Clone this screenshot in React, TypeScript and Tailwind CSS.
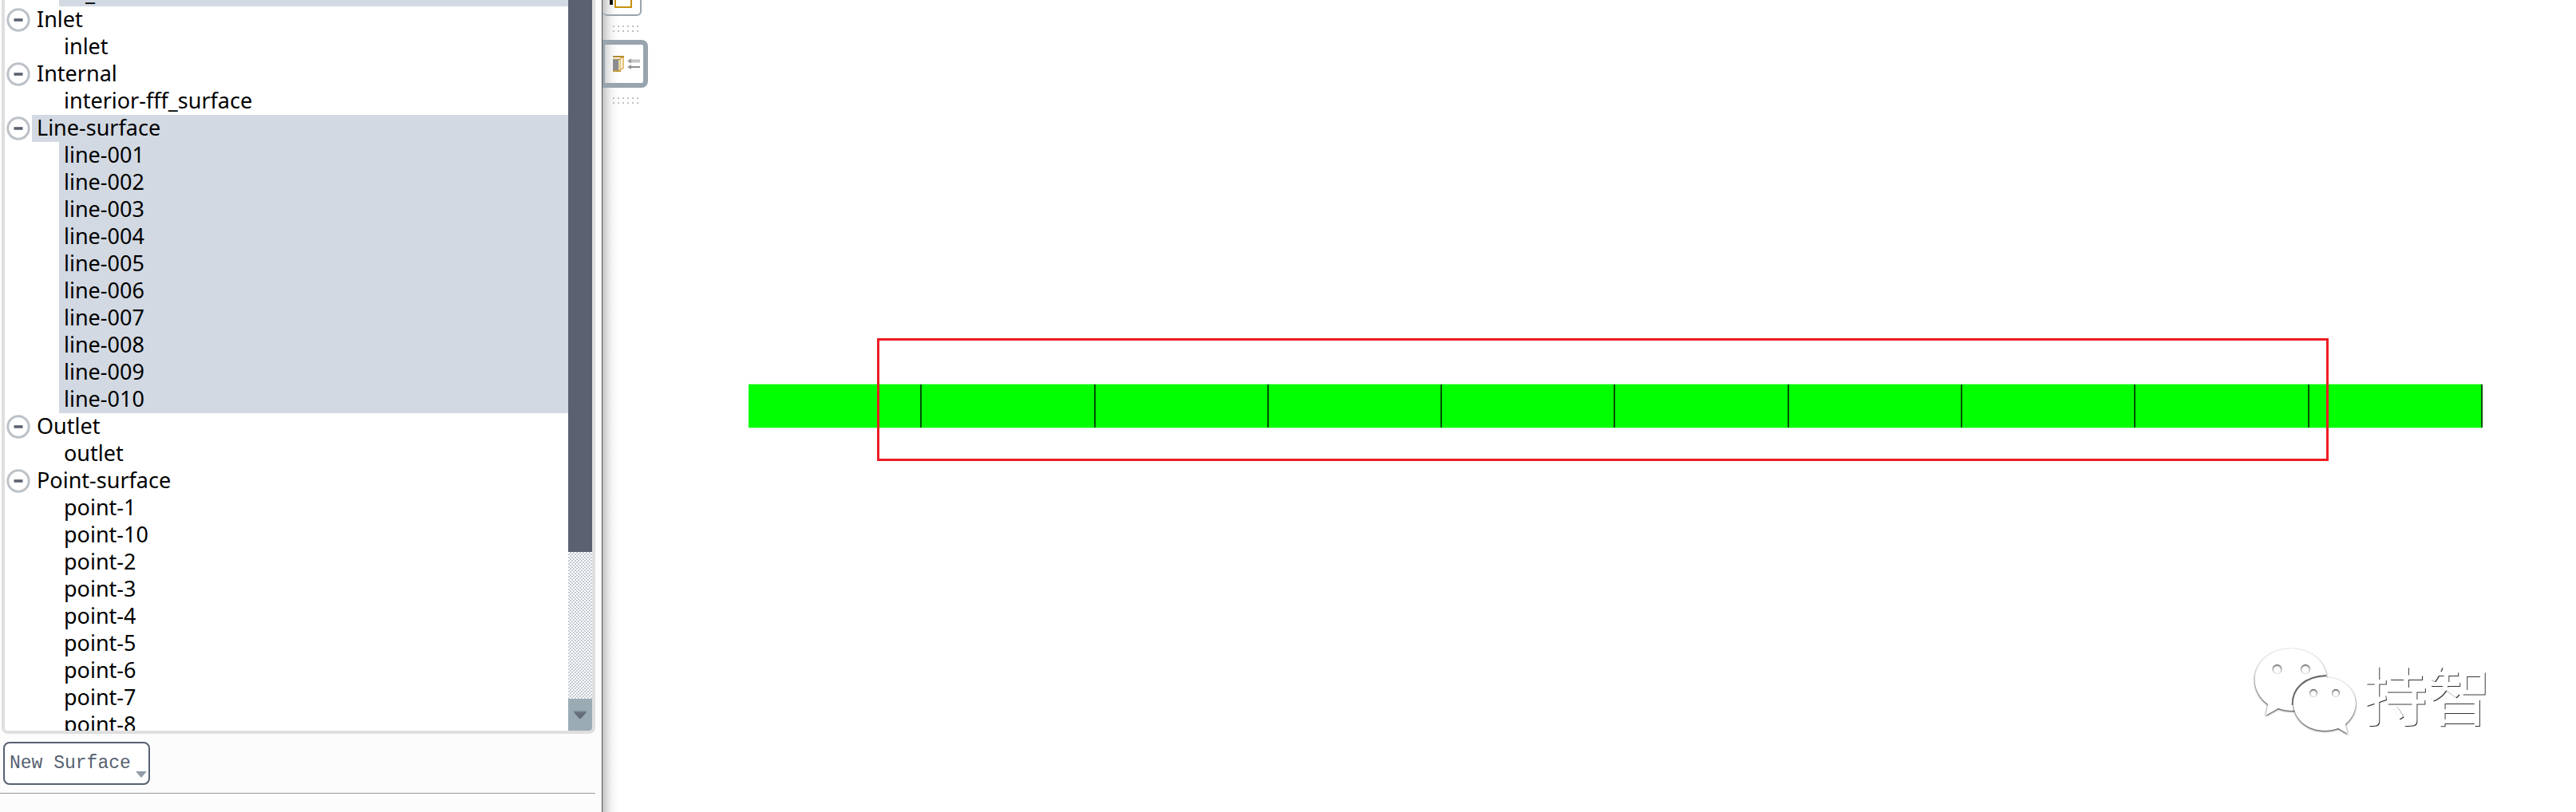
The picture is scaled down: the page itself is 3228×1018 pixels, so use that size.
type RowProps = { label: string; group?: boolean; selected?: boolean };

const rows: RowProps[] = [
  { label: "Inlet", group: true },
  { label: "inlet" },
  { label: "Internal", group: true },
  { label: "interior-fff_surface" },
  { label: "Line-surface", group: true, selected: true },
  { label: "line-001", selected: true },
  { label: "line-002", selected: true },
  { label: "line-003", selected: true },
  { label: "line-004", selected: true },
  { label: "line-005", selected: true },
  { label: "line-006", selected: true },
  { label: "line-007", selected: true },
  { label: "line-008", selected: true },
  { label: "line-009", selected: true },
  { label: "line-010", selected: true },
  { label: "Outlet", group: true },
  { label: "outlet" },
  { label: "Point-surface", group: true },
  { label: "point-1" },
  { label: "point-10" },
  { label: "point-2" },
  { label: "point-3" },
  { label: "point-4" },
  { label: "point-5" },
  { label: "point-6" },
  { label: "point-7" },
  { label: "point-8" },
];

function Row({ label, group, selected }: RowProps) {
  const tone = selected ? "bg-[#d2d9e2]" : "bg-white";
  return (
    <li className="flex h-[34px] shrink-0 items-center">
      {group ? (
        <button type="button" aria-label={"Collapse " + label} className="flex w-[34px] shrink-0 pl-0.5">
          <svg width="30" height="30" viewBox="0 0 30 30" className="block">
            <circle cx="15" cy="15" r="13.2" fill="#fff" stroke="#bcc2c8" strokeWidth="3" />
            <path d="M9.5 15h11" stroke="#5b6170" strokeWidth="3.6" />
          </svg>
        </button>
      ) : (
        <span className="w-[68px] shrink-0" />
      )}
      <span className={`flex h-full flex-1 items-center pb-0.5 pl-1.5 ${tone}`}>{label}</span>
    </li>
  );
}

function ScrollBar() {
  return (
    <div className="flex w-[30px] shrink-0 flex-col">
      <div className="w-full flex-[692] bg-[#5b6170]" />
      <div className="w-full flex-[184] bg-[conic-gradient(#c4ccd1_25%,#fff_0_50%,#c4ccd1_0_75%,#fff_0)] bg-[length:4px_4px]" />
      <button type="button" aria-label="Scroll down" className="flex h-10 items-center justify-center bg-[#9babb4]">
        <svg width="16" height="10" viewBox="0 0 16 10">
          <path d="M0 0h16v2H0z" fill="#7f8a95" />
          <path d="M0 2h16L9 10H7z" fill="#656d7b" />
        </svg>
      </button>
    </div>
  );
}

function Grip() {
  return (
    <div className="ml-[13px] grid w-8 grid-cols-6 gap-1">
      {Array.from({ length: 12 }, (_, i) => (
        <span key={i} className="size-0.5 bg-[#c0c0c0]" />
      ))}
    </div>
  );
}

function ToolBar() {
  return (
    <div className="flex w-[57px] shrink-0 flex-col items-start bg-[linear-gradient(to_right,#c2c2c2,#e0e0e0_6px,#f4f4f4_12px,#fff_20px)]">
      <button
        type="button"
        aria-label="Surface display"
        className="flex h-5 w-[49px] items-start rounded-b-md border-r-2 border-b-2 border-[#98a4ae] pl-[9px]"
      >
        <svg width="30" height="12" viewBox="0 0 30 12" className="block">
          <path d="M0 0h4v6H0z" fill="#111" />
          <path d="M7 -4V9H27V-4" fill="#fff" stroke="#c8920f" strokeWidth="2" />
        </svg>
      </button>
      <div className="pt-3 pb-2.5">
        <Grip />
      </div>
      <button
        type="button"
        aria-label="Toggle panel"
        className="flex h-[60px] w-[57px] items-center rounded-r-lg border-6 border-l-3 border-[#98a4ae] pl-2.5"
      >
        <svg width="36" height="22" viewBox="0 0 36 22" className="block">
          <path d="M0 5h9v14H0z" fill="#8c8c90" />
          <path d="M9 5l4-3v14l-4 3z" fill="#fff6e0" stroke="#e0b45c" strokeWidth="1.6" />
          <path d="M8 6v13" stroke="#ecd9a8" strokeWidth="2" />
          <path d="M0 2h14" stroke="#b58a2c" strokeWidth="2" />
          <path d="M0 5.5h9" stroke="#a98d50" strokeWidth="1.4" />
          <path d="M0 20h10" stroke="#c4983c" strokeWidth="2" />
          <path d="M20 7.500h14" stroke="#c4c4c4" strokeWidth="4" />
          <path d="M18 7.500l5-3v6zM18 15l5-3v6z" fill="#9a9a9a" />
          <path d="M20 15h14" stroke="#8e8e8e" strokeWidth="2" />
        </svg>
      </button>
      <div className="py-3">
        <Grip />
      </div>
    </div>
  );
}

function Watermark() {
  return (
    <div className="absolute right-[106px] bottom-[90px] flex items-end">
      <svg width="142" height="125" viewBox="0 0 142 125" className="block overflow-visible">
        <path
          className="[filter:drop-shadow(0_1px_1px_#222)]"
          fillRule="evenodd"
          fill="#fff"
          d="M22 80C11 72 5.500 61 5.500 49C5.500 27 25 10 51 10C76 10 96 27 96 49C96 71 77 88 52 88C46 88 40 87 35 85L19 94ZM27.500 36a6 6 0 1 0 12 0a6 6 0 1 0-12 0ZM63 36a6 6 0 1 0 12 0a6 6 0 1 0-12 0Z"
        />
        <path
          className="[filter:drop-shadow(0_1px_1px_#222)]"
          fillRule="evenodd"
          fill="#fff"
          d="M119 105C127 98 132 89 132 79C132 60 115 46 93 46C71 46 54 60 54 79C54 98 71 113 93 113C99 113 105 112 110 110L122 117ZM74 66a5 5 0 1 0 10 0a5 5 0 1 0-10 0ZM102 66a5 5 0 1 0 10 0a5 5 0 1 0-10 0Z"
        />
        <path d="M52.500 81C52 60 68 45 95 44" fill="none" stroke="#666" strokeWidth="1.8" />
      </svg>
      <span className="pb-5 text-[80px] leading-none text-white [font-family:'Noto_Sans_CJK_SC',sans-serif] [text-shadow:1px_1px_0_#333]">
        持智
      </span>
    </div>
  );
}

function Canvas() {
  return (
    <section className="relative flex min-w-0 flex-1 items-center pr-[117px] pl-[126px]">
      <div className="relative flex h-14 flex-1 border-y border-[#b4ffb4] bg-[#00ff00]">
        {Array.from({ length: 10 }, (_, i) => (
          <div key={i} className="flex-1 border-r-2 border-[#005000] last:border-r last:border-black" />
        ))}
        <div className="absolute -top-[58px] right-[8.9%] -bottom-[42px] left-[7.4%] border-3 border-[#ed1c24]" />
      </div>
      <Watermark />
    </section>
  );
}

export default function App() {
  return (
    <div className="flex h-screen overflow-hidden bg-white text-[27px] leading-[34px] text-black [font-family:'Noto_Sans','Open_Sans',sans-serif]">
      <aside className="flex w-[755px] shrink-0 flex-col border-r border-[#555] bg-[#fcfcfc]">
        <div className="mr-2 ml-0.5 flex min-h-0 flex-1 overflow-hidden rounded-b-lg border-4 border-t-0 border-[#dfdfdf] bg-white">
          <ul className="flex min-w-0 flex-1 flex-col overflow-hidden">
            <li className="ml-[68px] flex h-2 shrink-0 items-end overflow-hidden bg-[#d2d9e2] pl-[33px]">_</li>
            {rows.map((r) => (
              <Row key={r.label} {...r} />
            ))}
          </ul>
          <ScrollBar />
        </div>
        <div className="mr-2 border-b border-[#999] pt-2.5 pb-2.5 pl-1">
          <button
            type="button"
            className="flex h-[54px] w-[184px] items-center rounded-lg border-2 border-[#566170] bg-white pl-1.5 text-[23px] text-[#566170] [font-family:'Liberation_Mono',monospace]"
          >
            New Surface
            <svg width="14" height="8" viewBox="0 0 14 8" className="mt-7 ml-1.5">
              <path d="M0 0h14L7 8z" fill="#929ba6" />
            </svg>
          </button>
        </div>
        <div className="h-[23px] shrink-0" />
      </aside>
      <main className="flex min-w-0 flex-1">
        <ToolBar />
        <Canvas />
      </main>
    </div>
  );
}
